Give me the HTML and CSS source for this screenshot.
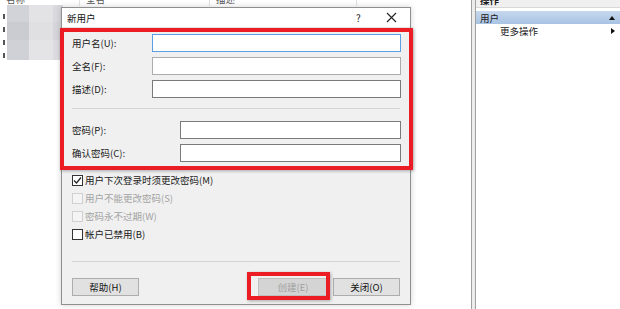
FILE: index.html
```html
<!DOCTYPE html>
<html lang="zh-CN">
<head>
  <meta charset="UTF-8" />
  <title>新用户</title>
  <link rel="stylesheet" href="styles.css">
</head>
<body>

  <div class="screen">
    <div class="list-pane">
      <div class="list-head">
        <span class="col col-name">名称</span>
        <span class="col col-full">全名</span>
        <span class="col col-desc">描述</span>
      </div>
      <div class="list-body">
        <div class="row-icons">
          <i></i><i></i><i></i><i></i>
        </div>
        <div class="mosaic">
          <span class="m1"></span><span class="m2"></span><span class="m3"></span>
          <span class="m4"></span><span class="m5"></span><span class="m6"></span>
          <span class="m7"></span><span class="m8"></span><span class="m9"></span>
        </div>
      </div>
    </div>

    <div class="splitter"></div>

    <aside class="actions">
      <div class="actions-head">操作</div>
      <div class="actions-group">
        <span>用户</span>
        <span class="tri-up"></span>
      </div>
      <div class="actions-item">
        <span>更多操作</span>
        <span class="tri-right"></span>
      </div>
    </aside>
  </div>

  <!-- dialog window over the console -->
  <div class="dialog">
    <div class="dialog-title">
      <span class="title-text">新用户</span>
      <span class="title-help">?</span>
      <svg class="title-close" width="11" height="11" viewBox="0 0 11 11">
        <path d="M1 1 L10 10 M10 1 L1 10" stroke="#222" stroke-width="1.1" fill="none"/>
      </svg>
    </div>

    <div class="dialog-body">
      <div class="fields">
        <label>用户名(U):</label><div class="input focused"></div>
        <label>全名(F):</label><div class="input"></div>
        <label>描述(D):</label><div class="input dark"></div>
      </div>

      <div class="sep sep-top"></div>

      <div class="fields fields-pw">
        <label>密码(P):</label><div class="input dark"></div>
        <label>确认密码(C):</label><div class="input dark"></div>
      </div>

      <div class="checks">
        <div class="check"><span class="box checked"><svg width="9" height="9" viewBox="0 0 9 9"><path d="M1 4.5 L3.5 7 L8 1.5" stroke="#222" stroke-width="1.2" fill="none"/></svg></span>用户下次登录时须更改密码(M)</div>
        <div class="check disabled"><span class="box"></span>用户不能更改密码(S)</div>
        <div class="check disabled"><span class="box"></span>密码永不过期(W)</div>
        <div class="check"><span class="box"></span>帐户已禁用(B)</div>
      </div>

      <div class="sep sep-bottom"></div>

      <div class="buttons">
        <button class="btn">帮助(H)</button>
        <button class="btn btn-create" disabled>创建(E)</button>
        <button class="btn">关闭(O)</button>
      </div>
    </div>
  </div>

  <!-- red annotation boxes -->
  <div class="mark mark-fields"></div>
  <div class="mark mark-create"></div>

</body>
</html>
```

FILE: styles.css
```css
* { margin: 0; padding: 0; box-sizing: border-box; }

body {
  width: 620px;
  height: 309px;
  overflow: hidden;
  position: relative;
  background: #fff;
  font-family: "Noto Sans CJK SC", "Noto Sans", sans-serif;
  font-size: 9.5px;
  color: #1a1a1a;
}

.screen {
  display: flex;
  height: 309px;
}

/* left list view */
.list-pane {
  width: 471px;
  overflow: hidden;
}

.list-head {
  display: flex;
  height: 14px;
  margin-top: -8px;
  line-height: 14px;
  color: #555;
}

.col { padding-left: 6px; border-right: 1px solid #e2e2e2; }
.col-name { width: 80px; }
.col-full { width: 130px; }
.col-desc { width: 147px; }

.list-body {
  display: flex;
  padding-top: 0;
}

.row-icons {
  display: flex;
  flex-direction: column;
  gap: 8px;
  padding: 8px 0 0 3px;
  width: 7px;
}

.row-icons i {
  display: block;
  width: 2px;
  height: 5px;
  background: #555;
}

.mosaic {
  display: grid;
  grid-template-columns: 22px 24px 10px;
  grid-template-rows: 17px 18px 20px;
  margin-top: -1px;
  filter: blur(0.4px);
}

.m1 { background: #d2d3d9; }
.m2 { background: #e3e3e6; }
.m3 { background: #dadade; }
.m4 { background: #cbccd2; }
.m5 { background: #e0e0e3; }
.m6 { background: #d6d6da; }
.m7 { background: #d0d1d6; }
.m8 { background: #e4e4e7; }
.m9 { background: #dcdce0; }

.splitter {
  width: 5px;
  border-left: 1px solid #a0a0a0;
  border-right: 1px solid #a0a0a0;
  background: #ececec;
}

/* right actions pane */
.actions {
  flex: 1;
}

.actions-head {
  height: 15px;
  margin-top: -7px;
  line-height: 14px;
  padding-left: 4px;
  font-weight: bold;
  background: #f0f0f0;
  border-bottom: 1px solid #d8d8d8;
}

.actions-group {
  display: flex;
  align-items: center;
  justify-content: space-between;
  height: 13px;
  margin-top: 3px;
  padding: 0 5px 0 4px;
  background: linear-gradient(#c6d8ee, #a8c3e3);
}

.actions-item {
  display: flex;
  align-items: center;
  justify-content: space-between;
  height: 14px;
  padding: 0 5px 0 24px;
}

.tri-up {
  width: 0;
  height: 0;
  border-left: 3.5px solid transparent;
  border-right: 3.5px solid transparent;
  border-bottom: 4px solid #111;
}

.tri-right {
  width: 0;
  height: 0;
  border-top: 3.5px solid transparent;
  border-bottom: 3.5px solid transparent;
  border-left: 4px solid #111;
}

/* dialog */
.dialog {
  position: absolute;
  left: 61px;
  top: 7px;
  width: 350px;
  height: 298px;
  border: 1px solid #8f8f8f;
  background: #f0f0f0;
  box-shadow: 0 0 6px rgba(0, 0, 0, 0.18);
  display: flex;
  flex-direction: column;
}

.dialog-title {
  display: flex;
  align-items: center;
  height: 19px;
  background: #fff;
  padding-left: 5px;
}

.title-text { flex: 1; color: #111; }

.title-help {
  width: 10px;
  margin-right: 20px;
  font-size: 10px;
  color: #222;
}

.title-close { margin-right: 13px; }

.dialog-body {
  padding: 7px 9px 0 10px;
}

.fields {
  display: grid;
  grid-template-columns: 80px 1fr;
  row-gap: 5px;
  align-items: center;
}

.fields-pw { grid-template-columns: 108px 1fr; }

.fields label { color: #1a1a1a; }

.input {
  height: 18px;
  background: #fff;
  border: 1px solid #acacac;
}

.input.focused { border-color: #5a9fe2; }
.input.dark { border-color: #7a7a7a; }

.sep {
  height: 1px;
  background: #d4d4d4;
  margin-right: 1px;
}

.sep-top { margin-top: 10px; margin-bottom: 12px; }

.checks {
  margin-top: 9px;
}

.check {
  display: flex;
  align-items: center;
  gap: 2px;
  height: 18px;
  color: #1a1a1a;
}

.check.disabled { color: #a3a3a3; }

.box {
  width: 11px;
  height: 11px;
  border: 1px solid #333;
  background: #fff;
  display: flex;
  align-items: center;
  justify-content: center;
}

.check.disabled .box { border-color: #d0d0d0; background: #f4f4f4; }

.sep-bottom { margin-top: 18px; }

.buttons {
  display: flex;
  gap: 5px;
  margin-top: 16px;
  padding-right: 1px;
}

.btn {
  width: 67px;
  height: 18px;
  background: #e1e1e1;
  border: 1px solid #adadad;
  font-family: inherit;
  font-size: 9.5px;
  color: #111;
}

.btn-create {
  width: 70px;
  margin-left: auto;
  background: #d4d4d4;
  border-color: #bfbfbf;
  color: #a0a0a0;
}

/* red highlight boxes */
.mark {
  position: absolute;
  border: 4px solid #ec1c24;
  box-shadow: 1px 1px 3px rgba(0, 0, 0, 0.3);
}

.mark-fields {
  left: 60px;
  top: 28px;
  width: 353px;
  height: 142px;
}

.mark-create {
  left: 247px;
  top: 272px;
  width: 83px;
  height: 28px;
}
```
